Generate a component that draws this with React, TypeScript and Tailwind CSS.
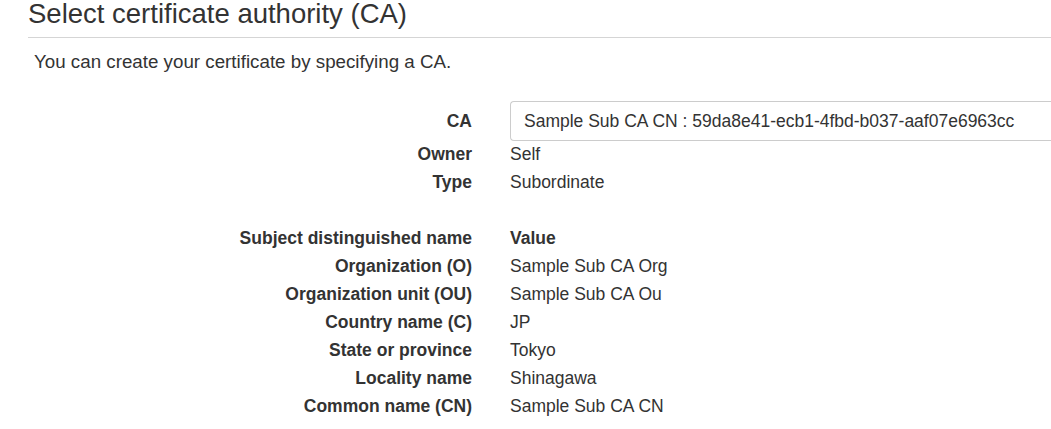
import React from 'react';

const subjectRows: [string, string][] = [
  ['Organization (O)', 'Sample Sub CA Org'],
  ['Organization unit (OU)', 'Sample Sub CA Ou'],
  ['Country name (C)', 'JP'],
  ['State or province', 'Tokyo'],
  ['Locality name', 'Shinagawa'],
  ['Common name (CN)', 'Sample Sub CA CN'],
];

const Row = ({ label, children, bold }: { label: string; children: React.ReactNode; bold?: boolean }) => (
  <div className="flex h-[28px] items-center">
    <div className="w-[472px] shrink-0 text-right font-bold whitespace-nowrap">{label}</div>
    <div className={`ml-[38px] whitespace-nowrap ${bold ? 'font-bold' : ''}`}>{children}</div>
  </div>
);

export default function App() {
  return (
    <div
      className="w-[1051px] h-[429px] overflow-hidden bg-white text-[#333] text-[17.5px] leading-[28px]"
      style={{ fontFamily: '"Liberation Sans", Arial, sans-serif' }}
    >
      <div className="pl-[28px]">
        <h1 className="text-[27.5px] leading-[27px] pb-[10px] border-b border-[#d5d5d5] whitespace-nowrap">
          Select certificate authority (CA)
        </h1>
      </div>
      <p className="pl-[34px] pt-[13px] text-[18.75px] leading-[22px] whitespace-nowrap">
        You can create your certificate by specifying a CA.
      </p>

      <div className="mt-[28px]">
        <div className="flex h-[40px] items-center">
          <div className="w-[472px] shrink-0 text-right font-bold">CA</div>
          <div className="ml-[38px] flex-1 h-[40px] border border-r-0 border-[#ccc] rounded-l-[4px] flex items-center pl-[13px] whitespace-nowrap">
            Sample Sub CA CN : 59da8e41-ecb1-4fbd-b037-aaf07e6963cc
          </div>
        </div>
        <div className="mt-[-1px]">
          <Row label="Owner">Self</Row>
          <Row label="Type">Subordinate</Row>
          <div className="h-[28px]" />
          <Row label="Subject distinguished name" bold>Value</Row>
          {subjectRows.map(([k, v]) => (
            <Row key={k} label={k}>{v}</Row>
          ))}
        </div>
      </div>
    </div>
  );
}
